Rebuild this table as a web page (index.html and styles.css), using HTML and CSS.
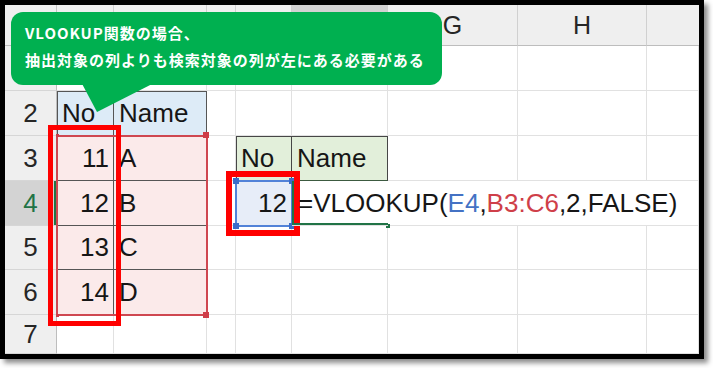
FILE: index.html
```html
<!DOCTYPE html>
<html lang="ja">
<head>
<meta charset="utf-8">
<title>VLOOKUP</title>
<link rel="stylesheet" href="styles.css">
</head>
<body>
<div class="page">
  <div class="frame">
    <div class="sheet">
      <!-- header row -->
      <div class="corner"></div>
      <div class="ch"></div><div class="ch"></div><div class="ch"></div><div class="ch"></div>
      <div class="ch sel"></div>
      <div class="ch">G</div><div class="ch">H</div><div class="ch last"></div>
      <!-- row 1 -->
      <div class="rh"></div>
      <div class="c"></div><div class="c"></div><div class="c"></div><div class="c"></div>
      <div class="c"></div><div class="c"></div><div class="c"></div><div class="c"></div>
      <!-- row 2 -->
      <div class="rh">2</div>
      <div class="c th1 first txt">No</div><div class="c th1 txt">Name</div>
      <div class="c"></div><div class="c"></div><div class="c"></div><div class="c"></div><div class="c"></div><div class="c"></div>
      <!-- row 3 -->
      <div class="rh">3</div>
      <div class="c td bcol num">11</div><div class="c td txt">A</div>
      <div class="c"></div>
      <div class="c th2 first txt">No</div><div class="c th2 txt">Name</div>
      <div class="c"></div><div class="c"></div><div class="c"></div>
      <!-- row 4 -->
      <div class="rh sel">4</div>
      <div class="c td bcol num">12</div><div class="c td txt">B</div>
      <div class="c"></div>
      <div class="c e4 num">12</div>
      <div class="c f4 nor"><span class="formula">=VLOOKUP(<span class="ref-b">E4</span>,<span class="ref-r">B3:C6</span>,2,FALSE)</span></div>
      <div class="c nor"></div><div class="c nor"></div><div class="c"></div>
      <!-- row 5 -->
      <div class="rh">5</div>
      <div class="c td bcol num">13</div><div class="c td txt">C</div>
      <div class="c"></div><div class="c"></div><div class="c"></div><div class="c"></div><div class="c"></div><div class="c"></div>
      <!-- row 6 -->
      <div class="rh">6</div>
      <div class="c td bcol num">14</div><div class="c td txt">D</div>
      <div class="c"></div><div class="c"></div><div class="c"></div><div class="c"></div><div class="c"></div><div class="c"></div>
      <!-- row 7 -->
      <div class="rh">7</div>
      <div class="c"></div><div class="c"></div><div class="c"></div><div class="c"></div>
      <div class="c"></div><div class="c"></div><div class="c"></div><div class="c"></div>
    </div>
  </div>

  <!-- reference highlight B3:C6 -->
  <div class="hl-red"></div>
  <div class="sq sq-r big" style="left:203px;top:132px"></div>
  <div class="sq sq-r big" style="left:203px;top:312px"></div>
  <div class="sq sq-r small" style="left:56px;top:134px"></div>
  <div class="sq sq-r small" style="left:56px;top:314px"></div>

  <!-- reference highlight E4 -->
  <div class="hl-blue"></div>
  <div class="sq sq-b" style="left:233px;top:178px"></div>
  <div class="sq sq-b" style="left:289px;top:178px"></div>
  <div class="sq sq-b" style="left:233px;top:223px"></div>
  <div class="sq sq-b" style="left:289px;top:223px"></div>
  <div class="sq sq-g" style="left:386px;top:224px"></div>

  <!-- annotation boxes -->
  <div class="mark mark1"></div>
  <div class="mark mark2"></div>

  <!-- callout -->
  <div class="callout">
    <div class="line">VLOOKUP関数の場合、</div>
    <div class="line">抽出対象の列よりも検索対象の列が左にある必要がある</div>
  </div>
  <svg class="tail" width="90" height="34" viewBox="0 0 90 34">
    <polygon points="5,0 22,32 85,0" fill="#00b050"/>
  </svg>
</div>
</body>
</html>
```

FILE: styles.css
```css
html, body {
  margin: 0;
  padding: 0;
  background: #ffffff;
}

.page {
  position: relative;
  width: 713px;
  height: 368px;
  overflow: hidden;
  font-family: "Liberation Sans", Arial, sans-serif;
}

.frame {
  width: 704px;
  height: 359px;
  box-sizing: border-box;
  border: 5px solid #000;
  box-shadow: 4px 4px 5px rgba(0, 0, 0, 0.45);
  overflow: hidden;
  background: #fff;
}

.sheet {
  display: grid;
  grid-template-columns: 52px 57px 93px 29px 56px 96px 130px 129px 52px;
  grid-template-rows: 41px 45px 45px 45px 45px 44px 45px 39px;
  width: 694px;
  height: 349px;
  color: #161616;
  font-size: 26px;
}

.sheet > div {
  box-sizing: border-box;
  display: flex;
  align-items: center;
  min-width: 0;
  white-space: nowrap;
}

/* column header */
.corner {
  background: #efefef;
  border-right: 1px solid #c4c4c4;
  border-bottom: 1px solid #bdbdbd;
}

.ch {
  background: #efefef;
  border-right: 1px solid #d0d0d0;
  border-bottom: 1px solid #bdbdbd;
  justify-content: center;
  font-size: 25px;
  color: #262626;
}

.ch.sel {
  background: #d2d2d2;
}

.ch.last {
  border-right: none;
}

/* row header */
.rh {
  background: #efefef;
  border-right: 1px solid #bdbdbd;
  border-bottom: 1px solid #d6d6d6;
  justify-content: center;
  color: #262626;
}

.rh.sel {
  background: #d3d3d3;
  color: #217346;
  box-shadow: inset -2px 0 0 #217346;
}

/* normal cells */
.c {
  border-right: 1px solid #e1e1e1;
  border-bottom: 1px solid #e1e1e1;
}

.c.nor {
  border-right: none;
}

.txt {
  padding-left: 5px;
}

.num {
  justify-content: flex-end;
  padding-right: 4px;
}

/* table B2:C6 */
.th1 {
  background: #ddebf7;
  border-right: 1px solid #555;
  border-bottom: 1px solid #555;
  box-shadow: inset 0 1px 0 #555;
}

.th1.first {
  box-shadow: inset 1px 1px 0 #555;
}

.td {
  background: #fbeaea;
  border-bottom: 1px solid #555;
}

.td.bcol {
  border-right: 1px solid #555;
}

/* table E3:F4 */
.th2 {
  background: #e2efda;
  border-right: 1px solid #464646;
  border-bottom: 1px solid #3c5a40;
  box-shadow: inset 0 1px 0 #464646;
}

.th2.first {
  box-shadow: inset 1px 1px 0 #464646;
}

.e4 {
  background: #e7edf8;
}

.f4 {
  position: relative;
  z-index: 1;
  padding-left: 6px;
  overflow: visible;
  box-shadow: inset 2px 0 0 #217346, inset 0 -2px 0 #217346;
}

.formula {
  color: #161616;
}

.ref-b {
  color: #4472c4;
}

.ref-r {
  color: #cf3f49;
}

/* reference highlights */
.hl-red {
  position: absolute;
  left: 56px;
  top: 135px;
  width: 152px;
  height: 181px;
  box-sizing: border-box;
  border: 2px solid #cf4751;
}

.hl-blue {
  position: absolute;
  left: 235px;
  top: 180px;
  width: 58px;
  height: 47px;
  box-sizing: border-box;
  border: 2px solid #5282d8;
}

.sq {
  position: absolute;
  width: 6px;
  height: 6px;
}

.sq-r {
  background: #cf3d48;
}

.sq-r.small {
  width: 3px;
  height: 3px;
}

.sq-b {
  background: #3b6cc9;
}

.sq-g {
  width: 4px;
  height: 4px;
  background: #217346;
}

/* red annotation boxes */
.mark {
  position: absolute;
  box-sizing: border-box;
  border-style: solid;
  border-color: #ff0000;
}

.mark1 {
  left: 48px;
  top: 125px;
  width: 73px;
  height: 201px;
  border-width: 5px;
}

.mark2 {
  left: 226px;
  top: 171px;
  width: 74px;
  height: 65px;
  border-width: 6px;
}

/* callout */
.callout {
  position: absolute;
  left: 11px;
  top: 12px;
  width: 431px;
  height: 73px;
  box-sizing: border-box;
  padding: 7px 0 0 14px;
  background: #00b050;
  border-radius: 12px;
  color: #ffffff;
  font-family: "Noto Sans CJK JP", "Noto Sans", sans-serif;
  font-weight: bold;
  font-size: 15px;
  letter-spacing: 1px;
  line-height: 27px;
  white-space: nowrap;
}

.tail {
  position: absolute;
  left: 75px;
  top: 80px;
  display: block;
}
```
